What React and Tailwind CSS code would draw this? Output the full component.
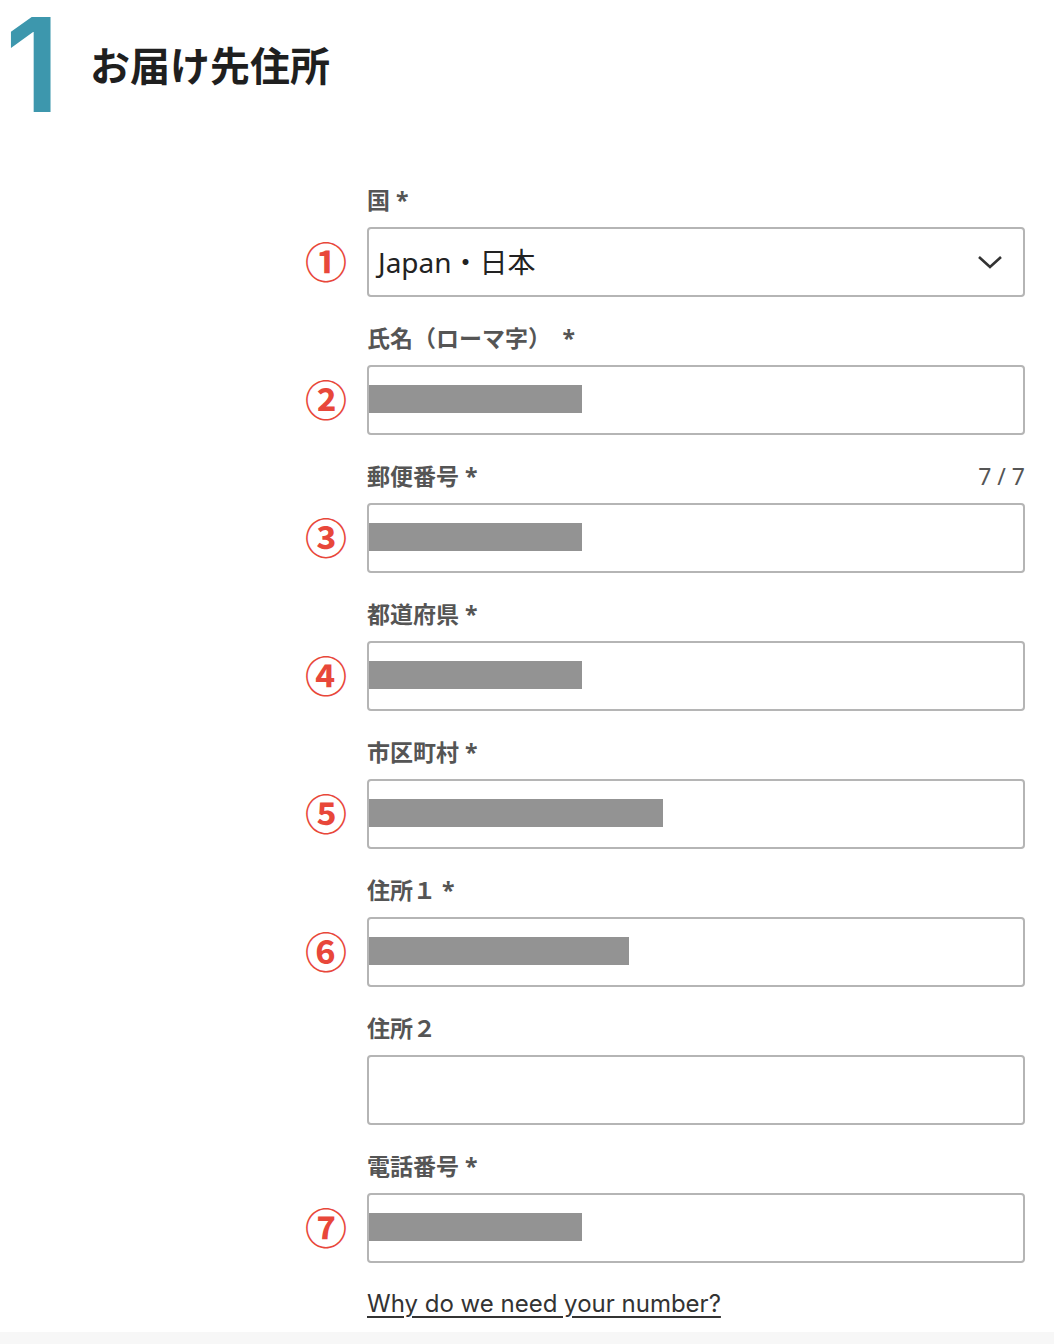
const fields = [
  { mark: "②", label: "氏名（ローマ字）", req: "\u3000*", bar: 214 },
  { mark: "③", label: "郵便番号", req: " *", bar: 214, counter: "7 / 7" },
  { mark: "④", label: "都道府県", req: " *", bar: 214 },
  { mark: "⑤", label: "市区町村", req: " *", bar: 295 },
  { mark: "⑥", label: "住所１", req: " *", bar: 261 },
  { mark: "", label: "住所２", req: "", bar: 0 },
  { mark: "⑦", label: "電話番号", req: " *", bar: 214 },
];

function Mark({ children }) {
  return (
    <div className="w-[62px] shrink-0 flex items-center">
      <span className="w-10 text-center text-[42px] leading-none font-bold text-[#e8473a]">
        {children}
      </span>
    </div>
  );
}

function Label({ text, req, counter }) {
  return (
    <div className="flex items-center justify-between h-[30px] mb-3 pl-[62px]">
      <span className="text-[23px] font-bold text-[#555]">
        {text}
        {req}
      </span>
      {counter && <span className="text-[23px] text-[#555]">{counter}</span>}
    </div>
  );
}

export default function App() {
  return (
    <div
      className="w-[1054px] min-h-[1344px] bg-white flex flex-col"
      style={{ fontFamily: '"Noto Sans", "Noto Sans CJK JP", sans-serif' }}
    >
      {/* header */}
      <div className="flex items-start h-[130px]">
        <span
          className="ml-[5px] mt-[13px] text-[130px] leading-[104px] font-semibold text-[#3d97ad]"
          style={{ fontFamily: "Inter, sans-serif" }}
        >
          1
        </span>
        <h1
          className="ml-[30px] mt-[35px] text-[40px] leading-[58px] font-bold text-[#1f1f1f]"
          style={{ fontFamily: '"Noto Sans CJK JP", sans-serif' }}
        >
          お届け先住所
        </h1>
      </div>

      {/* form */}
      <div className="mt-[55px] ml-[305px] w-[720px] flex flex-col gap-[26px]">
        <div>
          <Label text="国" req=" *" />
          <div className="flex">
            <Mark>①</Mark>
            <div className="flex-1 h-[70px] border-2 border-[#b5b5b5] rounded flex items-center justify-between pl-[9px] pr-[20px]">
              <span className="text-[28px] text-[#222]">Japan・日本</span>
              <svg width="26" height="16" viewBox="0 0 26 16" fill="none">
                <path d="M2 3l11 10L24 3" stroke="#333" strokeWidth="2.6" />
              </svg>
            </div>
          </div>
        </div>

        {fields.map((f) => (
          <div key={f.label}>
            <Label text={f.label} req={f.req} counter={f.counter} />
            <div className="flex">
              <Mark>{f.mark}</Mark>
              <div className="flex-1 h-[70px] border-2 border-[#b5b5b5] rounded pt-[18px]">
                {f.bar > 0 && (
                  <div className="h-[28px] bg-[#939393]" style={{ width: f.bar - 1 }} />
                )}
              </div>
            </div>
          </div>
        ))}

        <a
          href="#"
          className="mt-0 pl-[62px] text-[24px] leading-[30px] text-[#333] underline underline-offset-4"
          style={{ fontFamily: "Inter, sans-serif" }}
        >
          Why do we need your number?
        </a>
      </div>

      <div className="mt-auto h-[12px] bg-[#f7f7f7]" />
    </div>
  );
}
